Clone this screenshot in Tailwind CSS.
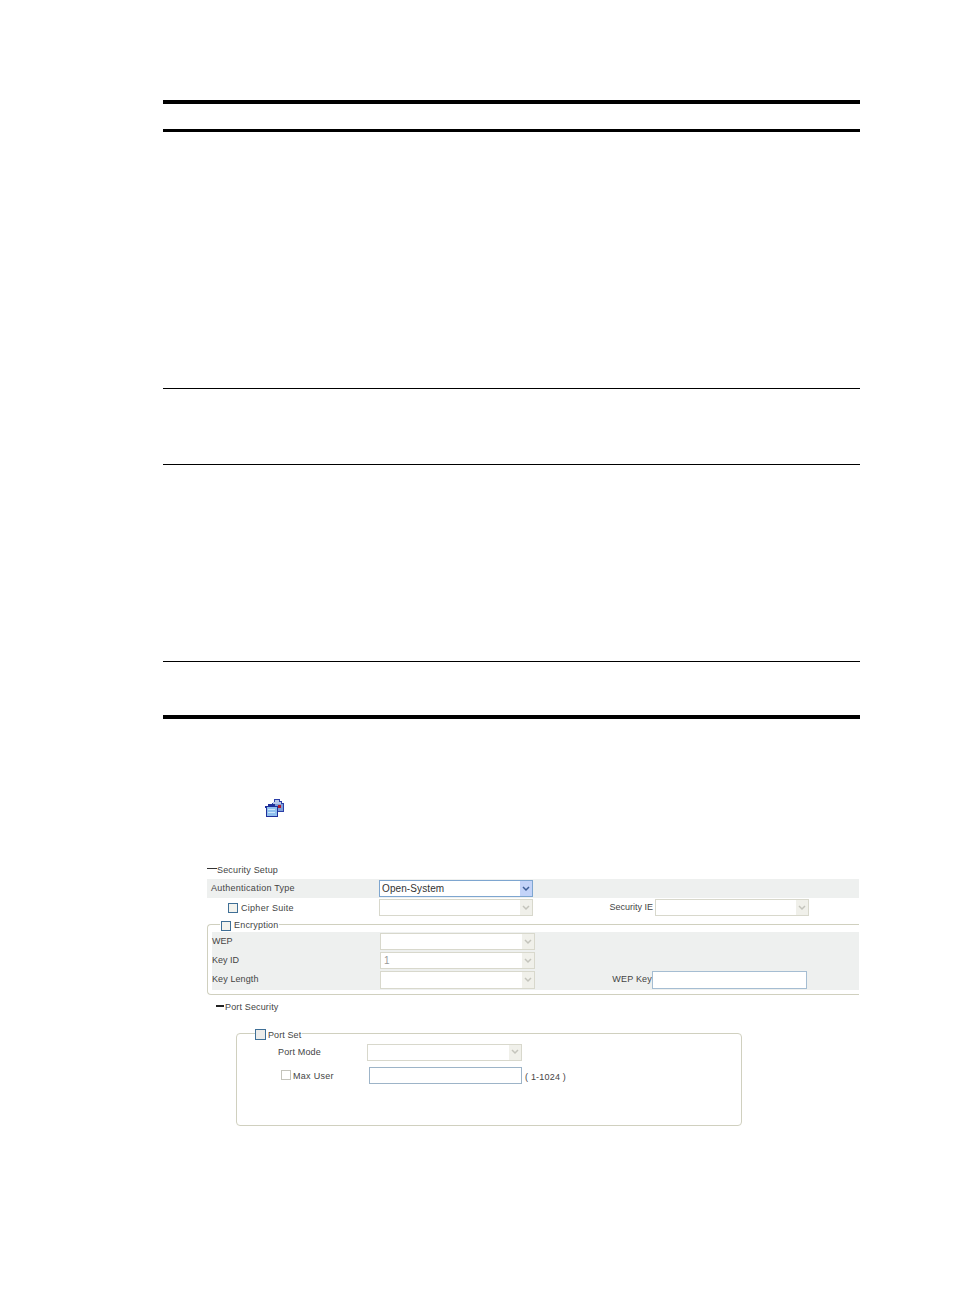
<!DOCTYPE html>
<html lang="en">

<head>
    <meta charset="UTF-8">
    <meta name="viewport" content="width=device-width, initial-scale=1.0">
    <title>Security Setup</title>
    <script src="https://cdn.jsdelivr.net/npm/@tailwindcss/browser@4"></script>
</head>

<body class="bg-white font-['Liberation_Sans',sans-serif] text-[#444] text-[9px]">
    <div class="w-[954px] h-[1296px] pt-[100px] pl-[163px] overflow-hidden">

        <!-- empty table rules -->
        <div class="w-[697px] h-[619px] flex flex-col border-t-4 border-b-4 border-black">
            <div class="h-[25px] shrink-0 border-b-[3px] border-black box-content"></div>
            <div class="h-[256px] shrink-0 border-b border-black box-content"></div>
            <div class="h-[75px] shrink-0 border-b border-black box-content"></div>
            <div class="h-[196px] shrink-0 border-b border-black box-content"></div>
        </div>

        <!-- icon -->
        <svg class="block ml-[102px] mt-[80px]" width="19" height="18" viewBox="0 0 19 18" shape-rendering="crispEdges">
            <path fill="#2b3fa8" d="M9 0h6v2h2v2h2v9h-6v-2H7V4h2z" />
            <path fill="#b8c8ea" d="M10 1h4v2h2v2H8V3h2z" />
            <path fill="#7f9fd8" d="M8 5h10v7h-5V9H8z" />
            <rect x="13" y="6" width="3" height="3" fill="#b01c2e" />
            <path fill="#1f2f9a" d="M3 5h7v2h3v11H1V9H0V7h3z" />
            <path fill="#8fc0ee" d="M2 8h10v9H2z" />
            <path fill="#cfe6fa" d="M3 10h7v1H3zM3 13h7v1H3z" />
        </svg>

        <!-- security setup -->
        <div class="w-[652px] ml-[44px] mt-[47px]">
            <div class="h-[15px] flex items-center">
                <span class="w-[10px] h-px bg-[#333] mb-[6px]"></span>
                <span class="leading-[11px] mb-[2px] tracking-[0.18px]">Security Setup</span>
            </div>

            <div class="h-[19px] bg-[#eef0ef] flex items-center pl-[4px]">
                <span class="w-[168px] tracking-[0.26px]">Authentication Type</span>
                <div class="w-[154px] h-[17px] bg-white border border-[#7ea6d0] flex justify-between items-center pl-[2px] text-[10px] text-[#333] tracking-[0.1px]">
                    Open-System
                    <span class="w-[12px] h-[15px] bg-[#c3d3f8] flex items-center justify-center">
                        <svg width="8" height="6" viewBox="0 0 8 6"><path d="M1 1l3 3 3-3" fill="none" stroke="#3d5e96" stroke-width="1.5" /></svg>
                    </span>
                </div>
            </div>

            <div class="h-[19px] flex items-center pl-[21px]">
                <span class="w-[10px] h-[10px] border border-[#3f6f96] bg-[#f3f3ee]"></span>
                <span class="w-[141px] pl-[3px] mt-[3px] tracking-[0.28px]">Cipher Suite</span>
                <div class="w-[154px] h-[17px] bg-white border border-[#d8d8cc] flex justify-end items-center">
                    <span class="w-[12px] h-[15px] bg-[#f0f0ea] flex items-center justify-center">
                        <svg width="8" height="6" viewBox="0 0 8 6"><path d="M1 1l3 3 3-3" fill="none" stroke="#c4c4bc" stroke-width="1.5" /></svg>
                    </span>
                </div>
                <span class="w-[122px] text-right pr-[2px]">Security IE</span>
                <div class="w-[154px] h-[17px] bg-white border border-[#d8d8cc] flex justify-end items-center">
                    <span class="w-[12px] h-[15px] bg-[#f0f0ea] flex items-center justify-center">
                        <svg width="8" height="6" viewBox="0 0 8 6"><path d="M1 1l3 3 3-3" fill="none" stroke="#c4c4bc" stroke-width="1.5" /></svg>
                    </span>
                </div>
            </div>

            <!-- encryption group -->
            <div class="relative mt-[7px] h-[71px] border border-r-0 border-[#d0d0bf] rounded-l-[4px] pt-[7px] pl-[4px]">
                <div class="absolute left-[12px] top-[-5px] bg-white flex items-center h-[11px] pl-px">
                    <span class="w-[10px] h-[10px] border border-[#3f6f96] bg-[#f3f3ee]"></span>
                    <span class="pl-[3px] tracking-[0.2px]">Encryption</span>
                </div>
                <div class="h-[58px] bg-[#eef0ef] flex flex-col gap-[2px] pt-px">
                    <div class="h-[17px] flex items-center">
                        <span class="w-[168px]">WEP</span>
                        <div class="w-[155px] h-[17px] bg-white border border-[#d8d8cc] flex justify-end items-center">
                            <span class="w-[12px] h-[15px] bg-[#f0f0ea] flex items-center justify-center">
                                <svg width="8" height="6" viewBox="0 0 8 6"><path d="M1 1l3 3 3-3" fill="none" stroke="#c4c4bc" stroke-width="1.5" /></svg>
                            </span>
                        </div>
                    </div>
                    <div class="h-[17px] flex items-center">
                        <span class="w-[168px]">Key ID</span>
                        <div class="w-[155px] h-[17px] bg-white border border-[#d8d8cc] flex justify-between items-center pl-[3px] text-[10px] text-[#999]">
                            1
                            <span class="w-[12px] h-[15px] bg-[#f0f0ea] flex items-center justify-center">
                                <svg width="8" height="6" viewBox="0 0 8 6"><path d="M1 1l3 3 3-3" fill="none" stroke="#c4c4bc" stroke-width="1.5" /></svg>
                            </span>
                        </div>
                    </div>
                    <div class="h-[18px] flex items-center">
                        <span class="w-[168px] tracking-[0.1px]">Key Length</span>
                        <div class="w-[155px] h-[18px] bg-white border border-[#d8d8cc] flex justify-end items-center">
                            <span class="w-[12px] h-[16px] bg-[#f0f0ea] flex items-center justify-center">
                                <svg width="8" height="6" viewBox="0 0 8 6"><path d="M1 1l3 3 3-3" fill="none" stroke="#c4c4bc" stroke-width="1.5" /></svg>
                            </span>
                        </div>
                        <span class="w-[117px] text-right tracking-[0.2px]">WEP Key</span>
                        <div class="w-[155px] h-[18px] bg-white border border-[#a5bdd2]"></div>
                    </div>
                </div>
            </div>

            <!-- port security -->
            <div class="h-[14px] mt-[5px] ml-[9px] flex items-center">
                <span class="w-[8px] h-[2px] bg-[#222] mb-[2px]"></span>
                <span class="pl-px mt-[2px] tracking-[0.15px]">Port Security</span>
            </div>

            <div class="relative w-[506px] h-[93px] ml-[29px] mt-[19px] border border-[#d0d0bf] rounded-[4px]">
                <div class="absolute left-[18px] top-[-5px] bg-white flex items-center h-[11px] pr-px">
                    <span class="w-[11px] h-[11px] border border-[#3f6f96] bg-[#ececea]"></span>
                    <span class="pl-[2px] mt-[2px] tracking-[0.1px]">Port Set</span>
                </div>
                <div class="flex items-center h-[18px] mt-[9px] pl-[41px]">
                    <span class="w-[89px] mt-[2px] tracking-[0.15px]">Port Mode</span>
                    <div class="w-[155px] h-[17px] bg-white border border-[#d8d8cc] flex justify-end items-center">
                        <span class="w-[12px] h-[15px] bg-[#f0f0ea] flex items-center justify-center">
                            <svg width="8" height="6" viewBox="0 0 8 6"><path d="M1 1l3 3 3-3" fill="none" stroke="#c4c4bc" stroke-width="1.5" /></svg>
                        </span>
                    </div>
                </div>
                <div class="flex items-center h-[18px] mt-[5px] pl-[44px]">
                    <span class="w-[10px] h-[10px] border border-[#c4c4bc]"></span>
                    <span class="w-[78px] pl-[2px] mt-[4px] tracking-[0.3px]">Max User</span>
                    <div class="w-[153px] h-[17px] bg-white border border-[#9db4c8]"></div>
                    <span class="pl-[3px] mt-[6px] tracking-[0.2px]">( 1-1024 )</span>
                </div>
            </div>
        </div>
    </div>
</body>

</html>
